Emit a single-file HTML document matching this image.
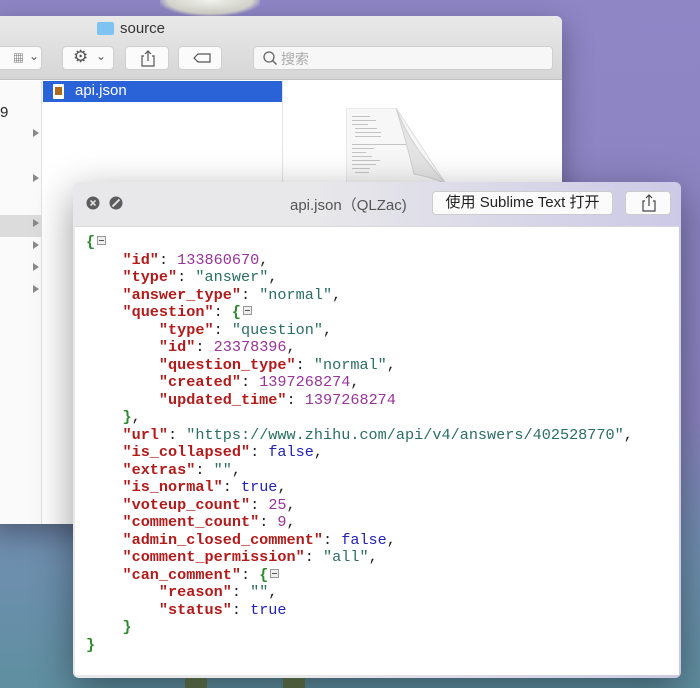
<!DOCTYPE html>
<html><head><meta charset="utf-8"><style>
*{margin:0;padding:0;box-sizing:border-box}
body{width:700px;height:688px;overflow:hidden;position:relative;font-family:"Liberation Sans","Noto Sans CJK SC",sans-serif;
background:linear-gradient(180deg,#8f86c6 0%,#8a82bf 60%,#6f8fb0 80%,#5f8fa0 100%)}
.finder{position:absolute;left:-10px;top:16px;width:572px;height:508px;background:#fff;border-radius:6px;box-shadow:0 10px 30px rgba(0,0,0,.35);overflow:hidden}
.tb{height:64px;background:linear-gradient(#e9e9e9,#d6d6d6);border-bottom:1px solid #c2c2c2;position:relative}
.btn{position:absolute;top:30px;height:24px;background:#fbfbfb;border:1px solid #cfcfcf;border-radius:4px}
.ql{position:absolute;left:73px;top:182px;width:608px;height:496px;border-radius:6px;background:linear-gradient(90deg,#e8e8ea 40%,#cbc9e6 100%);box-shadow:0 12px 40px rgba(0,0,0,.4);overflow:hidden}
.qlc{position:absolute;left:2px;top:44px;right:2px;bottom:3px;background:#fff;border-top:1px solid #d8d8d8}
pre{position:absolute;left:11px;top:7px;font-family:"Liberation Mono",monospace;font-size:15.2px;line-height:17.52px;color:#222}
.k{color:#b31b1b;font-weight:bold}.s{color:#2a6f64}.n{color:#993399}.b{color:#2323b8}.g{color:#2a8a2a;font-weight:bold}
.m{display:inline-block;width:9px;height:9px;border:1px solid #999;background:#eee;vertical-align:1px;margin-left:2px;position:relative}
.m:after{content:"";position:absolute;left:1px;top:3px;width:5px;height:1px;background:#555}
.tri{position:absolute;width:0;height:0;border-left:6px solid #8a8a8a;border-top:4px solid transparent;border-bottom:4px solid transparent}
.ln{position:absolute;height:1px;background:#c4c4c4}
</style></head><body>
<div style="position:absolute;left:160px;top:0;width:100px;height:16px;background:radial-gradient(ellipse at 50% 0,#f4f4f0,#d8d8d0 60%,transparent 75%)"></div>
<div class="finder">
 <div class="tb">
  <div style="position:absolute;left:107px;top:6px;width:17px;height:13px;background:#7fc4f0;border-radius:2px"></div>
  <div style="position:absolute;left:130px;top:4px;font-size:15px;color:#333">source</div>
  <div class="btn" style="left:2px;width:50px"><span style="position:absolute;left:20px;top:3px;font-size:11px;color:#555;letter-spacing:-1px">▦</span><span style="position:absolute;left:36px;top:2px;font-size:12px;color:#555">⌄</span></div>
  <div class="btn" style="left:72px;width:52px"><span style="position:absolute;left:10px;top:0px;font-size:17px;color:#555">⚙</span><span style="position:absolute;left:33px;top:2px;font-size:12px;color:#555">⌄</span></div>
  <div class="btn" style="left:135px;width:44px"><svg width="44" height="22" style="position:absolute;left:0;top:0"><path d="M18 9h-2v10h12V9h-2M22 14V4M19 7l3-3 3 3" stroke="#555" stroke-width="1.2" fill="none"/></svg></div>
  <div class="btn" style="left:188px;width:44px"><svg width="44" height="22"><path d="M15 11l4-4h12v8H19z" stroke="#555" stroke-width="1.2" fill="none"/></svg></div>
  <div class="btn" style="left:263px;width:300px;background:#f7f7f7"><svg width="20" height="22" style="position:absolute;left:6px;top:0"><circle cx="9" cy="10" r="5" stroke="#666" stroke-width="1.3" fill="none"/><path d="M12.5 13.5l4 4" stroke="#666" stroke-width="1.5"/></svg><span style="position:absolute;left:27px;top:2px;font-size:14px;color:#aaa">搜索</span></div>
 </div>
 <div style="position:absolute;left:10px;top:65px;width:42px;height:443px;background:#fafafa;border-right:1px solid #e2e2e2"></div>
 <div style="position:absolute;left:10px;top:199px;width:42px;height:22px;background:#dcdcdc"></div>
 <div style="position:absolute;left:10px;top:88px;font-size:15px;color:#222">9</div>
 <div class="tri" style="left:43px;top:113px"></div><div class="tri" style="left:43px;top:158px"></div><div class="tri" style="left:43px;top:203px"></div><div class="tri" style="left:43px;top:225px"></div><div class="tri" style="left:43px;top:247px"></div><div class="tri" style="left:43px;top:269px"></div>
 <div style="position:absolute;left:53px;top:65px;width:239px;height:21px;background:#2a62d8"></div>
 <div style="position:absolute;left:63px;top:68px;width:11px;height:15px;background:#fff;border-radius:1px"><div style="margin:3px 2px;width:7px;height:8px;background:#b06a20"></div></div>
 <div style="position:absolute;left:85px;top:66px;font-size:15px;color:#fff">api.json</div>
 <div style="position:absolute;left:292px;top:65px;width:1px;height:443px;background:#e4e4e4"></div>
 <svg width="130" height="110" style="position:absolute;left:356px;top:92px"><path d="M0 0H50L100 76V110H0Z" fill="#f7f7f7" stroke="#ddd"/><path d="M50 0C62 30 74 46 100 76C88 70 78 68 68 66C62 40 56 20 50 0Z" fill="#e4e4e4" stroke="#d0d0d0"/></svg>
 <div class="ln" style="left:362px;top:100px;width:18px"></div><div class="ln" style="left:362px;top:104px;width:24px"></div><div class="ln" style="left:362px;top:108px;width:16px"></div><div class="ln" style="left:365px;top:112px;width:22px"></div><div class="ln" style="left:365px;top:116px;width:26px"></div><div class="ln" style="left:365px;top:120px;width:26px"></div><div class="ln" style="left:362px;top:128px;width:54px"></div><div class="ln" style="left:362px;top:132px;width:22px"></div><div class="ln" style="left:362px;top:136px;width:14px"></div><div class="ln" style="left:362px;top:140px;width:20px"></div><div class="ln" style="left:362px;top:144px;width:28px"></div><div class="ln" style="left:362px;top:148px;width:24px"></div><div class="ln" style="left:362px;top:152px;width:18px"></div><div class="ln" style="left:365px;top:156px;width:14px"></div>
</div>
<div class="ql">
 <svg width="60" height="20" style="position:absolute;left:12px;top:13px"><circle cx="8" cy="8" r="6.5" fill="#5c5c5c"/><path d="M5.5 5.5l5 5M10.5 5.5l-5 5" stroke="#ddd" stroke-width="1.6"/><circle cx="31" cy="8" r="6.5" fill="#5c5c5c"/><path d="M27.5 11.5l7-7" stroke="#ddd" stroke-width="2"/></svg>
 <div style="position:absolute;left:217px;top:12px;font-size:15px;color:#555">api.json（QLZac)</div>
 <div style="position:absolute;left:359px;top:9px;width:181px;height:24px;background:#fbfbfb;border:1px solid #ccc;border-radius:4px;font-size:15px;color:#222;text-align:center;line-height:22px">使用 Sublime Text 打开</div>
 <div style="position:absolute;left:552px;top:9px;width:46px;height:24px;background:#fbfbfb;border:1px solid #ccc;border-radius:4px"><svg width="46" height="22"><path d="M19 9h-2v10h12V9h-2M23 14V3M20 6l3-3 3 3" stroke="#444" stroke-width="1.2" fill="none"/></svg></div>
 <div class="qlc"><pre><span class="g">{</span><span class="m"></span>
    <span class="k">"id"</span>: <span class="n">133860670</span>,
    <span class="k">"type"</span>: <span class="s">"answer"</span>,
    <span class="k">"answer_type"</span>: <span class="s">"normal"</span>,
    <span class="k">"question"</span>: <span class="g">{</span><span class="m"></span>
        <span class="k">"type"</span>: <span class="s">"question"</span>,
        <span class="k">"id"</span>: <span class="n">23378396</span>,
        <span class="k">"question_type"</span>: <span class="s">"normal"</span>,
        <span class="k">"created"</span>: <span class="n">1397268274</span>,
        <span class="k">"updated_time"</span>: <span class="n">1397268274</span>
    <span class="g">}</span>,
    <span class="k">"url"</span>: <span class="s">"https://www.zhihu.com/api/v4/answers/402528770"</span>,
    <span class="k">"is_collapsed"</span>: <span class="b">false</span>,
    <span class="k">"extras"</span>: <span class="s">""</span>,
    <span class="k">"is_normal"</span>: <span class="b">true</span>,
    <span class="k">"voteup_count"</span>: <span class="n">25</span>,
    <span class="k">"comment_count"</span>: <span class="n">9</span>,
    <span class="k">"admin_closed_comment"</span>: <span class="b">false</span>,
    <span class="k">"comment_permission"</span>: <span class="s">"all"</span>,
    <span class="k">"can_comment"</span>: <span class="g">{</span><span class="m"></span>
        <span class="k">"reason"</span>: <span class="s">""</span>,
        <span class="k">"status"</span>: <span class="b">true</span>
    <span class="g">}</span>
<span class="g">}</span></pre></div>
</div>
<div style="position:absolute;left:185px;top:678px;width:22px;height:10px;background:#4a5a3a"></div>
<div style="position:absolute;left:283px;top:678px;width:22px;height:10px;background:#4a5a3a"></div>
</body></html>
